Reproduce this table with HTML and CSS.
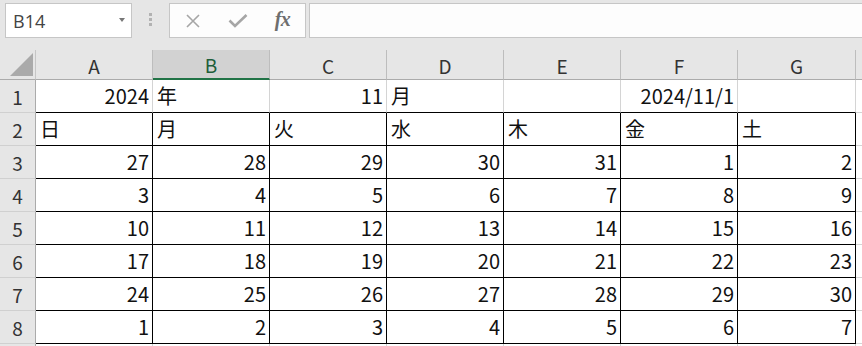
FILE: index.html
```html
<!DOCTYPE html>
<html lang="ja">
<head>
<meta charset="utf-8">
<link rel="stylesheet" href="styles.css">
</head>
<body>
<div class="topbar">
  <div class="namebox"><span class="nb-text">B14</span><span class="nb-arrow"></span></div>
  <div class="dots"><i></i><i></i><i></i></div>
  <div class="fbtns">
    <span class="fbtn"><svg width="16" height="14" viewBox="0 0 16 14"><path d="M2 1 L14 13 M14 1 L2 13" stroke="#a6a6a6" stroke-width="1.6" fill="none"/></svg></span>
    <span class="fbtn"><svg width="20" height="14" viewBox="0 0 20 14"><path d="M1.5 6.5 L7 12 L18.5 1" stroke="#a6a6a6" stroke-width="2.6" fill="none"/></svg></span>
    <span class="fbtn fx">fx</span>
  </div>
  <div class="finput"></div>
</div>
<div class="sheet">
  <div class="corner"><span class="tri"></span></div>
  <div class="ch">A</div><div class="ch sel">B</div><div class="ch">C</div><div class="ch">D</div><div class="ch">E</div><div class="ch">F</div><div class="ch">G</div><div class="ch last"></div>

  <div class="rh">1</div>
  <div class="c top num">2024</div><div class="c top">年</div><div class="c top num">11</div><div class="c top">月</div><div class="c top"></div><div class="c top num">2024/11/1</div><div class="c top"></div><div class="c"></div>

  <div class="rh">2</div>
  <div class="c b">日</div><div class="c b">月</div><div class="c b">火</div><div class="c b">水</div><div class="c b">木</div><div class="c b">金</div><div class="c b">土</div><div class="c"></div>

  <div class="rh">3</div>
  <div class="c b num">27</div><div class="c b num">28</div><div class="c b num">29</div><div class="c b num">30</div><div class="c b num">31</div><div class="c b num">1</div><div class="c b num">2</div><div class="c"></div>

  <div class="rh">4</div>
  <div class="c b num">3</div><div class="c b num">4</div><div class="c b num">5</div><div class="c b num">6</div><div class="c b num">7</div><div class="c b num">8</div><div class="c b num">9</div><div class="c"></div>

  <div class="rh">5</div>
  <div class="c b num">10</div><div class="c b num">11</div><div class="c b num">12</div><div class="c b num">13</div><div class="c b num">14</div><div class="c b num">15</div><div class="c b num">16</div><div class="c"></div>

  <div class="rh">6</div>
  <div class="c b num">17</div><div class="c b num">18</div><div class="c b num">19</div><div class="c b num">20</div><div class="c b num">21</div><div class="c b num">22</div><div class="c b num">23</div><div class="c"></div>

  <div class="rh">7</div>
  <div class="c b num">24</div><div class="c b num">25</div><div class="c b num">26</div><div class="c b num">27</div><div class="c b num">28</div><div class="c b num">29</div><div class="c b num">30</div><div class="c"></div>

  <div class="rh">8</div>
  <div class="c b num">1</div><div class="c b num">2</div><div class="c b num">3</div><div class="c b num">4</div><div class="c b num">5</div><div class="c b num">6</div><div class="c b num">7</div><div class="c"></div>

  <div class="rh"></div>
  <div class="c"></div><div class="c"></div><div class="c"></div><div class="c"></div><div class="c"></div><div class="c"></div><div class="c"></div><div class="c"></div>
</div>
</body>
</html>
```

FILE: styles.css
```css
* { box-sizing: border-box; }
html, body {
  margin: 0;
  padding: 0;
  background: #e6e6e6;
  width: 862px;
  height: 346px;
  overflow: hidden;
  font-family: "Noto Sans CJK JP", "Noto Sans", sans-serif;
}
.topbar {
  display: flex;
  align-items: flex-start;
  height: 50px;
  padding: 3px 0 0 5px;
  background: #e6e6e6;
}
.namebox {
  width: 127px;
  height: 35px;
  background: #fff;
  border: 1px solid #c6c6c6;
  display: flex;
  align-items: center;
  justify-content: space-between;
  padding: 0 6px 0 7px;
}
.nb-text {
  font-family: "Open Sans", "Liberation Sans", sans-serif;
  font-size: 18px;
  color: #444;
}
.nb-arrow {
  width: 0;
  height: 0;
  border-left: 3.5px solid transparent;
  border-right: 3.5px solid transparent;
  border-top: 4px solid #777;
  margin-top: -2px;
}
.dots {
  width: 3px;
  margin: 10px 17px 0 17px;
  display: flex;
  flex-direction: column;
  gap: 2px;
}
.dots i {
  display: block;
  width: 3px;
  height: 3px;
  background: #b2b2b2;
}
.fbtns {
  width: 137px;
  height: 35px;
  background: #fdfdfd;
  border: 1px solid #c6c6c6;
  display: flex;
  align-items: center;
}
.fbtn {
  width: 45px;
  height: 33px;
  display: flex;
  align-items: center;
  justify-content: center;
}
.fx {
  font-family: "Liberation Serif", serif;
  font-style: italic;
  font-weight: bold;
  font-size: 20px;
  color: #6e6e6e;
  padding-bottom: 3px;
  letter-spacing: -0.5px;
}
.finput {
  flex: 1;
  height: 35px;
  margin-left: 3px;
  margin-right: -10px;
  background: #fdfdfd;
  border: 1px solid #c6c6c6;
}
.sheet {
  display: grid;
  grid-template-columns: 36px 117px 117px 117px 117px 117px 117px 118px 1fr;
  grid-template-rows: 30px repeat(9, 33px);
  height: 296px;
  overflow: hidden;
  background: #fff;
}
.corner {
  background: #e6e6e6;
  border-right: 1px solid #c6c6c6;
  border-bottom: 1px solid #ababab;
  position: relative;
}
.tri {
  position: absolute;
  left: 10px;
  top: 3px;
  width: 0;
  height: 0;
  border-left: 23px solid transparent;
  border-bottom: 23px solid #aaaaaa;
}
.ch {
  background: #e6e6e6;
  border-right: 1px solid #bdbdbd;
  border-bottom: 1px solid #ababab;
  display: flex;
  align-items: center;
  justify-content: center;
  font-size: 19px;
  color: #333;
  padding-top: 1px;
}
.ch.sel {
  background: #d2d2d2;
  border-bottom: 2px solid #217346;
  color: #1e5e3a;
}
.ch.last { border-right: none; }
.rh {
  background: #e6e6e6;
  border-right: 1px solid #ababab;
  border-bottom: 1px solid #d0d0d0;
  display: flex;
  align-items: center;
  justify-content: center;
  font-size: 19px;
  color: #333;
}
.c {
  background: #fff;
  border-right: 1px solid #d4d4d4;
  border-bottom: 1px solid #d4d4d4;
  font-size: 20px;
  line-height: 32px;
  color: #111;
  padding: 0 4px;
  white-space: nowrap;
  overflow: hidden;
}
.c.top { border-bottom-color: #000; }
.c.b { border-right-color: #000; border-bottom-color: #000; }
.c.num { text-align: right; padding-right: 3px; }
```
